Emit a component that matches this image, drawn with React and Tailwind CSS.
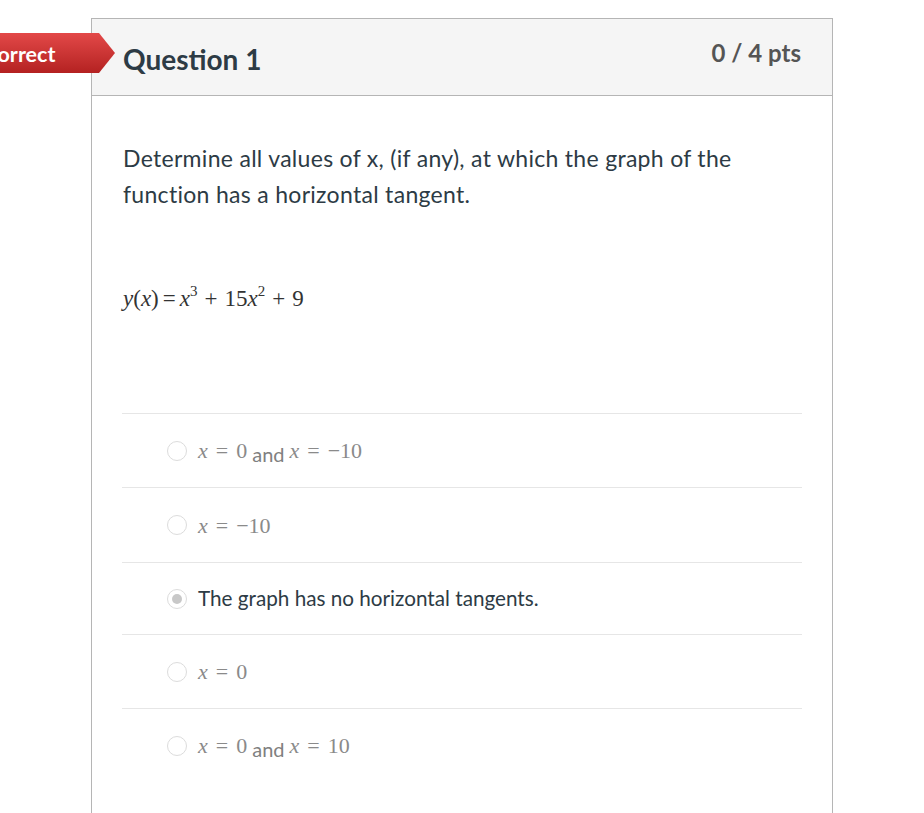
export default function App() {
  const answers = [
    { parts: [["m", "0"], ["t", "and"], ["m", "\u221210"]], h: "h-[74px]" },
    { parts: [["m", "\u221210"]], h: "h-[75px]" },
    { text: "The graph has no horizontal tangents.", selected: true, h: "h-[72px]" },
    { parts: [["m", "0"]], h: "h-[74px]" },
    { parts: [["m", "0"], ["t", "and"], ["m", "10"]], h: "h-[74px]" },
  ];

  const math = (val, key) => (
    <span key={key} className="font-['Liberation_Serif',serif] text-[22px] text-[#8a8a8a]">
      <i>x</i>
      <span className="mx-[8px]">=</span>
      {val}
    </span>
  );

  return (
    <div className="relative min-h-[813px] bg-white font-['Lato','Open_Sans',sans-serif] overflow-hidden">
      {/* result badge */}
      <div className="absolute left-[-34px] top-[33px] h-[40px] w-[149px] flex items-center pl-[3px] pt-[4px] bg-gradient-to-b from-[#e34848] to-[#b42121] [clip-path:polygon(0_0,calc(100%-16px)_0,100%_50%,calc(100%-16px)_100%,0_100%)]">
        <span className="text-white font-bold text-[21.5px] leading-none">Incorrect</span>
      </div>

      <div className="ml-[91px] mt-[18px] w-[742px] border border-[#b5b5b5] border-b-0 min-h-[795px]">
        <div className="h-[77px] bg-[#f5f5f5] border-b border-[#b5b5b5] flex items-center justify-between px-[31px] pt-[4px]">
          <h2 className="text-[28px] font-bold text-[#2d3b45]">Question 1</h2>
          <span className="text-[24px] font-bold text-[#555] -mt-[12px]">0 / 4 pts</span>
        </div>

        <div className="px-[30px] pt-[44px]">
          <p className="text-[23px] leading-[36px] tracking-[0.3px] text-[#2d3b45] pl-[1px] pr-[40px]">
            Determine all values of x, (if any), at which the graph of the function has a horizontal tangent.
          </p>

          <div className="mt-[72px] h-[30px] flex items-center pl-[1px] font-['Liberation_Serif',serif] text-[23px] text-[#333]">
            <i>y</i>(<i>x</i>)<span className="mx-[4px]">=</span><i>x</i>
            <sup className="text-[15px] -top-[8px]">3</sup>
            <span className="mx-[7px]">+</span>15<i>x</i>
            <sup className="text-[15px] -top-[8px]">2</sup>
            <span className="mx-[7px]">+</span>9
          </div>

          <div className="mt-[99px]">
            {answers.map((a, i) => (
              <div key={i} className={`${a.h} border-t border-[#e6e6e6] flex items-center pl-[45px] gap-[11px]`}>
                <span className="w-[20px] h-[20px] rounded-full border border-[#dcdcdc] flex items-center justify-center shrink-0">
                  {a.selected && <span className="w-[10px] h-[10px] rounded-full bg-[#c8c8c8]" />}
                </span>
                {a.text ? (
                  <span className="text-[20.7px] text-[#2d3b45]">{a.text}</span>
                ) : (
                  <span className="flex items-baseline">
                    {a.parts.map((p, j) =>
                      p[0] === "m" ? (
                        math(p[1], j)
                      ) : (
                        <span key={j} className="mx-[5px] text-[20px] text-[#808080] translate-y-[4px] inline-block">
                          {p[1]}
                        </span>
                      )
                    )}
                  </span>
                )}
              </div>
            ))}
          </div>
        </div>
      </div>
    </div>
  );
}
